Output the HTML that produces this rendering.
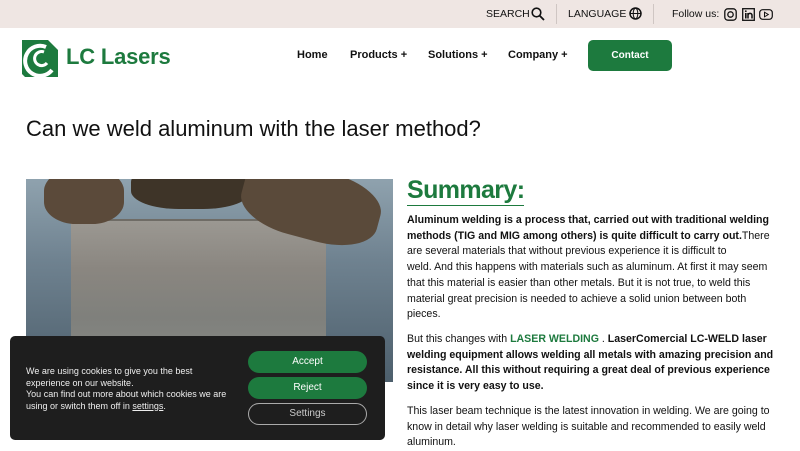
<!DOCTYPE html>
<html><head><meta charset="utf-8"><style>
*{margin:0;padding:0;box-sizing:border-box}
body{width:800px;height:450px;overflow:hidden;background:#fff;font-family:"Liberation Sans",Arial,sans-serif;color:#111;position:relative}
.top{position:absolute;left:0;top:0;width:800px;height:28px;background:#efe6e3}
.top span{position:absolute;top:8px;font-size:10.5px;color:#111;white-space:nowrap}
.sep{position:absolute;top:4px;width:1px;height:20px;background:#cfc6c3}
.logo{position:absolute;left:22px;top:40px}
.logotext{position:absolute;left:66px;top:44px;font-size:22px;font-weight:bold;color:#1d7a3e;letter-spacing:-0.2px}
.nav{position:absolute;top:49px;font-size:11px;font-weight:bold;color:#111;white-space:nowrap}
.contact{position:absolute;left:588px;top:40px;width:84px;height:31px;background:#1d7a3e;border-radius:5px;color:#fff;font-size:10px;font-weight:bold;text-align:center;line-height:31px}
h1{position:absolute;left:26px;top:116px;font-size:22px;font-weight:normal;color:#111}
.img{position:absolute;left:26px;top:179px;width:367px;height:203px;background:linear-gradient(180deg,#8fa2ae 0%,#6f8290 40%,#4d5f6c 100%);overflow:hidden}
.plate{position:absolute;left:45px;top:40px;width:255px;height:163px;background:linear-gradient(180deg,#9b9892 0%,#8a8680 30%,#7f807c 60%,#8a8b87 100%);border-top:2px solid #6f6c66}
.h1b{position:absolute;border-radius:40%;background:#5a4b3a}
.sum{position:absolute;left:407px;top:175px;font-size:25px;font-weight:bold;color:#1d7a3e;border-bottom:1.5px solid #1d7a3e;line-height:30px;letter-spacing:-0.6px}
.txt{position:absolute;left:407px;font-size:10.6px;line-height:15.7px;color:#111;white-space:nowrap}
.txt b{font-weight:bold}
.g{color:#1d7a3e;font-weight:bold}
.ck{position:absolute;left:10px;top:336px;width:375px;height:104px;background:#1e1e1e;border-radius:5px}
.ck p{position:absolute;left:16px;top:30px;font-size:9px;line-height:11.5px;color:#eee;white-space:nowrap}
.btn{position:absolute;left:238px;width:119px;height:22px;border-radius:11px;font-size:10px;text-align:center;line-height:22px;color:#fff}
</style></head><body>
<div class="top">
<span style="left:486px">SEARCH</span>
<svg style="position:absolute;left:531px;top:7px" width="14" height="14" viewBox="0 0 14 14"><circle cx="5.5" cy="5.5" r="4.3" fill="none" stroke="#111" stroke-width="1.6"/><line x1="8.6" y1="8.6" x2="13" y2="13" stroke="#111" stroke-width="1.8"/></svg>
<div class="sep" style="left:556px"></div>
<span style="left:568px">LANGUAGE</span>
<svg style="position:absolute;left:629px;top:7px" width="13" height="13" viewBox="0 0 13 13"><circle cx="6.5" cy="6.5" r="5.5" fill="none" stroke="#111" stroke-width="1.5"/><ellipse cx="6.5" cy="6.5" rx="2.3" ry="5.3" fill="none" stroke="#111" stroke-width="1"/><line x1="1" y1="6.5" x2="12" y2="6.5" stroke="#111"/></svg>
<div class="sep" style="left:653px"></div>
<span style="left:672px">Follow us:</span>
<svg style="position:absolute;left:724px;top:8px" width="13" height="13" viewBox="0 0 13 13"><rect x="0.8" y="0.8" width="11.4" height="11.4" rx="3" fill="none" stroke="#111" stroke-width="1.3"/><circle cx="6.5" cy="6.5" r="2.7" fill="none" stroke="#111" stroke-width="1.3"/></svg>
<svg style="position:absolute;left:742px;top:8px" width="13" height="13" viewBox="0 0 13 13"><rect x="0.7" y="0.7" width="11.6" height="11.6" fill="none" stroke="#111" stroke-width="1.3"/><rect x="3" y="5" width="1.6" height="5.5" fill="#111"/><circle cx="3.8" cy="3.2" r="0.9" fill="#111"/><path d="M6 5v5.5M6 7.2c0-2.5 4-2.5 4 0v3.3" fill="none" stroke="#111" stroke-width="1.5"/></svg>
<svg style="position:absolute;left:759px;top:9px" width="14" height="11" viewBox="0 0 14 11"><rect x="0.7" y="0.7" width="12.6" height="9.6" rx="3" fill="none" stroke="#111" stroke-width="1.2"/><path d="M5.5 3.2v4.6l3.8-2.3z" fill="none" stroke="#111" stroke-width="1"/></svg>
</div>
<svg class="logo" width="36" height="37" viewBox="0 0 36 37"><path d="M0 0h26l10 10v27H3l-3-3z" fill="#1d7a3e"/><path d="M30 30 A15 15 0 1 1 24 7" fill="none" stroke="#fff" stroke-width="4"/><path d="M25 23 A7 7 0 1 1 22 12" fill="none" stroke="#fff" stroke-width="3"/></svg>
<div class="logotext">LC Lasers</div>
<div class="nav" style="left:297px">Home</div>
<div class="nav" style="left:350px">Products +</div>
<div class="nav" style="left:428px">Solutions +</div>
<div class="nav" style="left:508px">Company +</div>
<div class="contact">Contact</div>
<h1>Can we weld aluminum with the laser method?</h1>
<div class="img">
<div class="plate"></div>
<div class="h1b" style="left:18px;top:-10px;width:80px;height:55px;background:#5b4a3a"></div>
<div class="h1b" style="left:105px;top:-15px;width:120px;height:45px;background:#3e3428"></div>
<div class="h1b" style="left:215px;top:-10px;width:140px;height:70px;background:#5a4a3a;transform:rotate(15deg)"></div>
</div>
<div class="sum">Summary:</div>
<div class="txt" style="top:213px"><b>Aluminum welding is a process that, carried out with traditional welding</b><br><b>methods (TIG and MIG among others) is quite difficult to carry out.</b>There<br>are several materials that without previous experience it is difficult to<br>weld. And this happens with materials such as aluminum. At first it may seem<br>that this material is easier than other metals. But it is not true, to weld this<br>material great precision is needed to achieve a solid union between both<br>pieces.</div>
<div class="txt" style="top:332px">But this changes with <span class="g">LASER WELDING</span> . <b>LaserComercial LC-WELD laser</b><br><b>welding equipment allows welding all metals with amazing precision and</b><br><b>resistance. All this without requiring a great deal of previous experience</b><br><b>since it is very easy to use.</b></div>
<div class="txt" style="top:404px">This laser beam technique is the latest innovation in welding. We are going to<br>know in detail why laser welding is suitable and recommended to easily weld<br>aluminum.</div>
<div class="ck">
<p>We are using cookies to give you the best<br>experience on our website.<br>You can find out more about which cookies we are<br>using or switch them off in <u>settings</u>.</p>
<div class="btn" style="top:15px;background:#1d7a3e">Accept</div>
<div class="btn" style="top:41px;background:#1d7a3e">Reject</div>
<div class="btn" style="top:67px;border:1px solid #aaa;color:#ccc;line-height:20px">Settings</div>
</div>
</body></html>
